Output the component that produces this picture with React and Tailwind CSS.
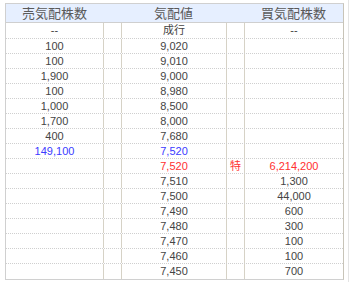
import React from 'react';

const rows = [
  { sell: '--', price: '成行', buy: '--' },
  { sell: '100', price: '9,020' },
  { sell: '100', price: '9,010' },
  { sell: '1,900', price: '9,000' },
  { sell: '100', price: '8,980' },
  { sell: '1,000', price: '8,500' },
  { sell: '1,700', price: '8,000' },
  { sell: '400', price: '7,680' },
  { sell: '149,100', price: '7,520', tone: 'blue' },
  { price: '7,520', mark: '特', buy: '6,214,200', tone: 'red' },
  { price: '7,510', buy: '1,300' },
  { price: '7,500', buy: '44,000' },
  { price: '7,490', buy: '600' },
  { price: '7,480', buy: '300' },
  { price: '7,470', buy: '100' },
  { price: '7,460', buy: '100' },
  { price: '7,450', buy: '700' },
];

const cols = 'grid grid-cols-[97px_18px_105px_18px_99px]';
const cell = 'flex items-center justify-center border-l border-[#d6d2c6] first:border-l-0';

export default function App() {
  const font = { fontFamily: '"Liberation Sans", Arial, "Noto Sans CJK JP", sans-serif' };
  return (
    <div className="w-[349px] h-[282px] bg-white relative" style={font}>
      <div className="absolute right-0 top-0 h-full w-px bg-[#e4e4e4]" />
      <div className="pt-[3px] pl-[5px]">
        <div className="w-[339px] border border-[#d0d0d0] border-r-[#c8c4b8]">
          <div className={`${cols} h-[19px] bg-[#e6efff] border-b border-[#cfcfcf] text-[13px] text-[#5a5a5a]`}>
            <div className="flex items-center justify-center">売気配株数</div>
            <div />
            <div className="flex items-center justify-center">気配値</div>
            <div />
            <div className="flex items-center justify-center">買気配株数</div>
          </div>
          {rows.map((r, i) => {
            const color =
              r.tone === 'blue' ? 'text-[#3b3bff]' : r.tone === 'red' ? 'text-[#ff3030]' : 'text-[#444]';
            return (
              <div
                key={i}
                className={`${cols} ${i === 0 ? 'h-[16px]' : 'h-[15px]'} text-[11px] leading-none ${
                  i < rows.length - 1 ? 'border-b border-dotted border-[#cfcfcf]' : ''
                }`}
              >
                <div className={`${cell} ${r.tone === 'blue' ? color : 'text-[#444]'}`}>{r.sell || ''}</div>
                <div className={cell} />
                <div className={`${cell} ${color}`}>{r.price}</div>
                <div className={`${cell} ${color}`}>{r.mark || ''}</div>
                <div className={`${cell} ${r.tone === 'red' ? color : 'text-[#444]'}`}>{r.buy || ''}</div>
              </div>
            );
          })}
        </div>
      </div>
    </div>
  );
}
